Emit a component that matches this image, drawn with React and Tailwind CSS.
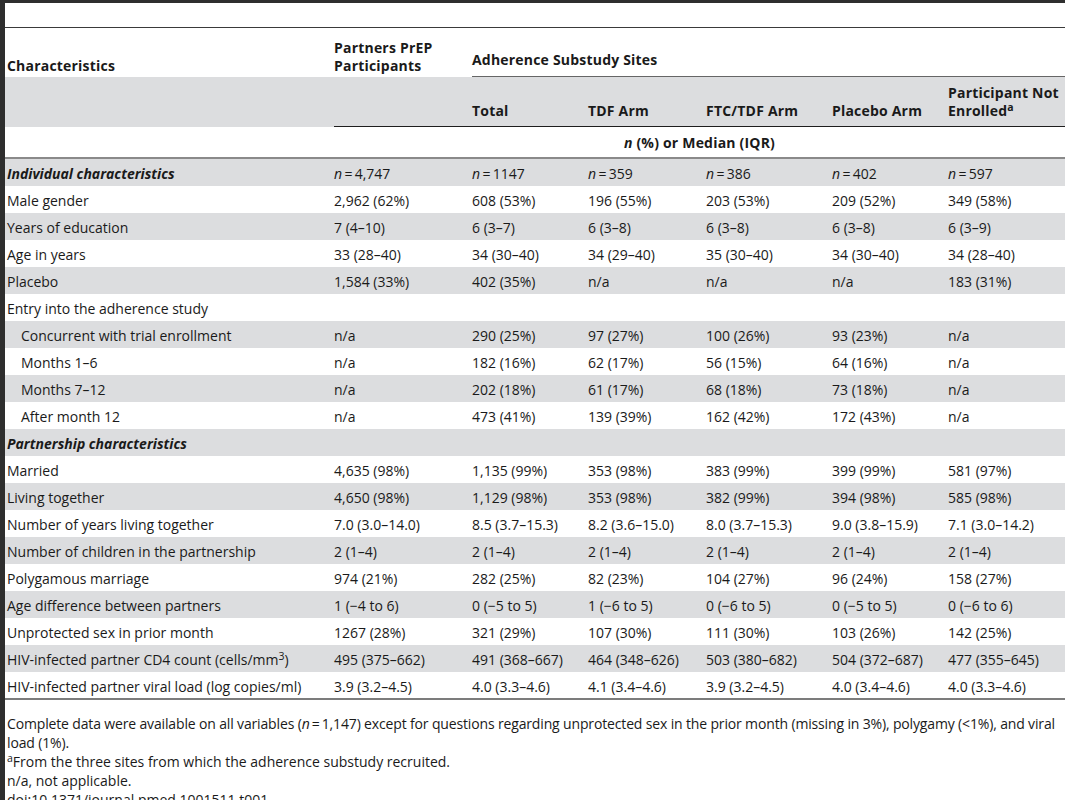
import React from 'react';

const cols = 'grid grid-cols-[329px_138px_116px_118px_126px_116px_117px]';

const N = ({ v }) => (
    <span><i>n</i>{'\u2009=\u2009'}{v}</span>
);

const rows = [
    { label: 'Individual characteristics', section: true, vals: [<N v="4,747" />, <N v="1147" />, <N v="359" />, <N v="386" />, <N v="402" />, <N v="597" />] },
    { label: 'Male gender', vals: ['2,962 (62%)', '608 (53%)', '196 (55%)', '203 (53%)', '209 (52%)', '349 (58%)'] },
    { label: 'Years of education', vals: ['7 (4–10)', '6 (3–7)', '6 (3–8)', '6 (3–8)', '6 (3–8)', '6 (3–9)'] },
    { label: 'Age in years', vals: ['33 (28–40)', '34 (30–40)', '34 (29–40)', '35 (30–40)', '34 (30–40)', '34 (28–40)'] },
    { label: 'Placebo', vals: ['1,584 (33%)', '402 (35%)', 'n/a', 'n/a', 'n/a', '183 (31%)'] },
    { label: 'Entry into the adherence study', vals: ['', '', '', '', '', ''] },
    { label: 'Concurrent with trial enrollment', indent: true, vals: ['n/a', '290 (25%)', '97 (27%)', '100 (26%)', '93 (23%)', 'n/a'] },
    { label: 'Months 1–6', indent: true, vals: ['n/a', '182 (16%)', '62 (17%)', '56 (15%)', '64 (16%)', 'n/a'] },
    { label: 'Months 7–12', indent: true, vals: ['n/a', '202 (18%)', '61 (17%)', '68 (18%)', '73 (18%)', 'n/a'] },
    { label: 'After month 12', indent: true, vals: ['n/a', '473 (41%)', '139 (39%)', '162 (42%)', '172 (43%)', 'n/a'] },
    { label: 'Partnership characteristics', section: true, vals: ['', '', '', '', '', ''] },
    { label: 'Married', vals: ['4,635 (98%)', '1,135 (99%)', '353 (98%)', '383 (99%)', '399 (99%)', '581 (97%)'] },
    { label: 'Living together', vals: ['4,650 (98%)', '1,129 (98%)', '353 (98%)', '382 (99%)', '394 (98%)', '585 (98%)'] },
    { label: 'Number of years living together', vals: ['7.0 (3.0–14.0)', '8.5 (3.7–15.3)', '8.2 (3.6–15.0)', '8.0 (3.7–15.3)', '9.0 (3.8–15.9)', '7.1 (3.0–14.2)'] },
    { label: 'Number of children in the partnership', vals: ['2 (1–4)', '2 (1–4)', '2 (1–4)', '2 (1–4)', '2 (1–4)', '2 (1–4)'] },
    { label: 'Polygamous marriage', vals: ['974 (21%)', '282 (25%)', '82 (23%)', '104 (27%)', '96 (24%)', '158 (27%)'] },
    { label: 'Age difference between partners', vals: ['1 (\u22124 to 6)', '0 (\u22125 to 5)', '1 (\u22126 to 5)', '0 (\u22126 to 5)', '0 (\u22125 to 5)', '0 (\u22126 to 6)'] },
    { label: 'Unprotected sex in prior month', vals: ['1267 (28%)', '321 (29%)', '107 (30%)', '111 (30%)', '103 (26%)', '142 (25%)'] },
    { label: <span>HIV-infected partner CD4 count (cells/mm<sup>3</sup>)</span>, vals: ['495 (375–662)', '491 (368–667)', '464 (348–626)', '503 (380–682)', '504 (372–687)', '477 (355–645)'] },
    { label: 'HIV-infected partner viral load (log copies/ml)', vals: ['3.9 (3.2–4.5)', '4.0 (3.3–4.6)', '4.1 (3.4–4.6)', '3.9 (3.2–4.5)', '4.0 (3.4–4.6)', '4.0 (3.3–4.6)'] },
];

export default function App() {
    return (
        <div className="w-[1065px] h-[800px] overflow-hidden bg-white border-t-[3px] border-l-[5px] border-[#2e2e2e] font-['Open_Sans',sans-serif] text-[14px] text-[#1a1a1a]">
            <div className="h-[25px] border-b border-[#3a3a3a]" />

            {/* header row 1 */}
            <div className={`${cols} h-[49px] font-bold leading-[18px] tracking-[0.2px]`}>
                <div className="flex items-end pl-[2px] pb-[2px]">Characteristics</div>
                <div className="flex items-end pb-[2px]">Partners PrEP<br />Participants</div>
                <div className="col-span-5 flex items-end pb-[7px] border-b border-[#666]">Adherence Substudy Sites</div>
            </div>

            {/* header row 2 */}
            <div className={`${cols} h-[50px] bg-[#dcdddf] font-bold leading-[18px] tracking-[0.2px]`}>
                <div />
                <div className="border-b border-[#1e1e1e]" />
                <div className="flex items-end pb-[6px] border-b border-[#1e1e1e]">Total</div>
                <div className="flex items-end pb-[6px] border-b border-[#1e1e1e]">TDF Arm</div>
                <div className="flex items-end pb-[6px] border-b border-[#1e1e1e]">FTC/TDF Arm</div>
                <div className="flex items-end pb-[6px] border-b border-[#1e1e1e]">Placebo Arm</div>
                <div className="flex items-end pb-[6px] border-b border-[#1e1e1e] whitespace-nowrap">
                    <span>Participant Not<br />Enrolled<sup>a</sup></span>
                </div>
            </div>

            {/* header row 3 */}
            <div className={`${cols} h-[32px] font-bold tracking-[0.2px] border-b-2 border-[#8a8a8a]`}>
                <div />
                <div className="col-span-6 flex items-center justify-center pt-[1px]">
                    <span><i>n</i> (%) or Median (IQR)</span>
                </div>
            </div>

            {rows.map((r, i) => (
                <div
                    key={i}
                    className={`${cols} items-center pt-[2px] ${i % 2 === 0 ? 'bg-[#dcdddf]' : 'bg-white'} ${i === rows.length - 1 ? 'border-b-2 border-[#7c7c7c] h-[28px]' : 'h-[27px]'}`}
                >
                    <div className={`${r.indent ? 'pl-[16px]' : 'pl-[2px]'} ${r.section ? 'font-bold italic' : ''} whitespace-nowrap`}>
                        {r.label}
                    </div>
                    {r.vals.map((v, j) => (
                        <div key={j} className="whitespace-nowrap">{v}</div>
                    ))}
                </div>
            ))}

            <div className="pl-[2px] pt-[14px] leading-[19px]">
                <p className="tracking-[-0.15px]">
                    Complete data were available on all variables (<i>n</i>{'\u2009=\u2009'}1,147) except for questions regarding unprotected sex in the prior month (missing in 3%), polygamy ({'<'}1%), and viral load (1%).
                </p>
                <p><sup>a</sup>From the three sites from which the adherence substudy recruited.</p>
                <p>n/a, not applicable.</p>
                <p>doi:10.1371/journal.pmed.1001511.t001</p>
            </div>
        </div>
    );
}
